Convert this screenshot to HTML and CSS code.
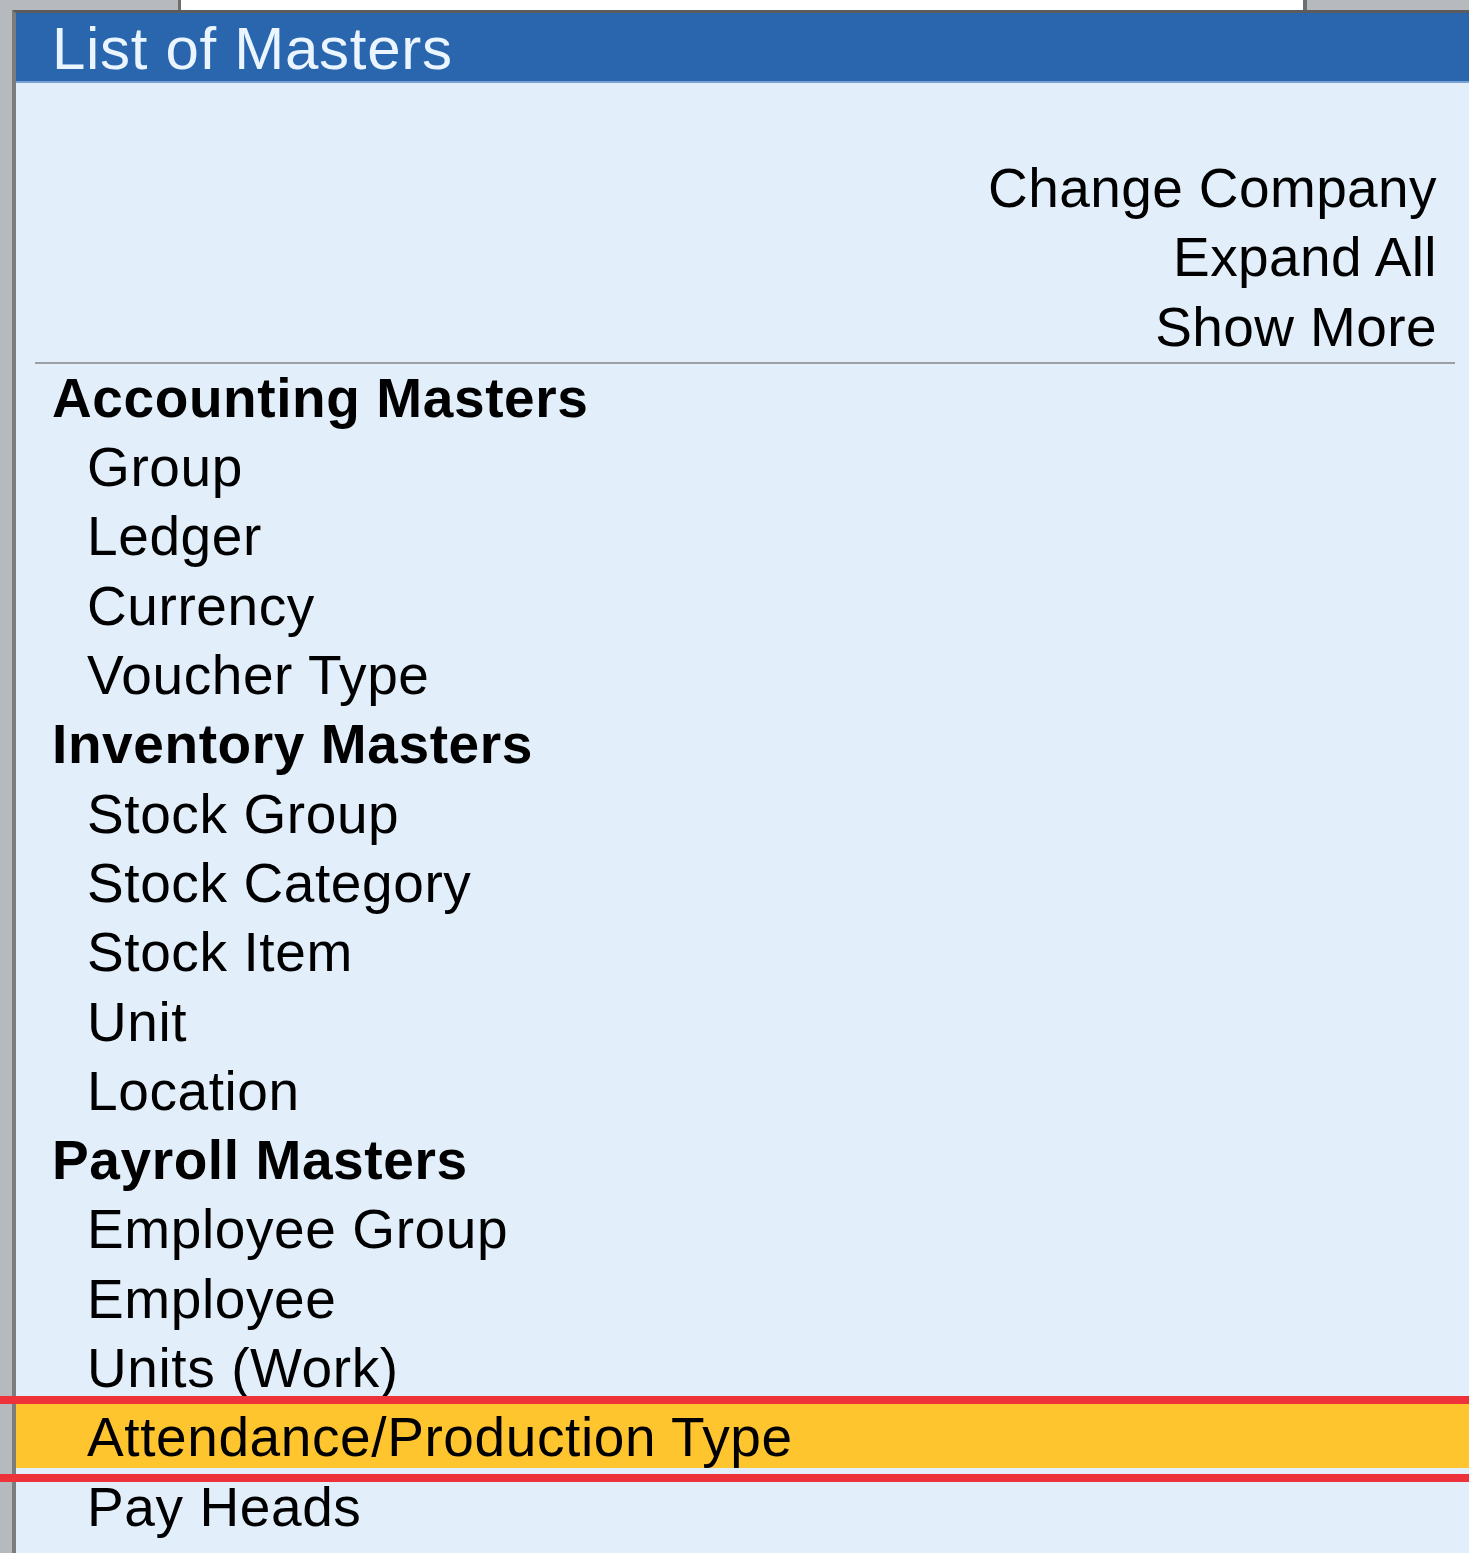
FILE: index.html
```html
<!DOCTYPE html>
<html lang="en">
<head>
<meta charset="utf-8">
<title>List of Masters</title>
<link rel="stylesheet" href="styles.css">
</head>
<body>
  <div class="topstrip"><div class="field"></div></div>
  <div class="frame">
    <div class="panel">
      <div class="titlebar">List of Masters</div>
      <div class="content">
        <div class="links">
          <div class="link">Change Company</div>
          <div class="link">Expand All</div>
          <div class="link">Show More</div>
        </div>
        <div class="sep"></div>
        <ul class="list">
          <li class="head">Accounting Masters</li>
          <li class="item">Group</li>
          <li class="item">Ledger</li>
          <li class="item">Currency</li>
          <li class="item">Voucher Type</li>
          <li class="head">Inventory Masters</li>
          <li class="item">Stock Group</li>
          <li class="item">Stock Category</li>
          <li class="item">Stock Item</li>
          <li class="item">Unit</li>
          <li class="item">Location</li>
          <li class="head">Payroll Masters</li>
          <li class="item">Employee Group</li>
          <li class="item">Employee</li>
          <li class="item">Units (Work)</li>
          <li class="item selected">Attendance/Production Type</li>
          <li class="item">Pay Heads</li>
          <li class="item">Payroll Voucher Type</li>
        </ul>
      </div>
    </div>
  </div>
  <div class="redbox"></div>
</body>
</html>
```

FILE: styles.css
```css
html, body {
  margin: 0;
  padding: 0;
}

body {
  position: relative;
  width: 1469px;
  height: 1553px;
  overflow: hidden;
  background: #b6babe;
  font-family: "Liberation Sans", Arial, sans-serif;
  color: #000;
}

.topstrip {
  height: 10px;
  display: flex;
}

.field {
  margin-left: 178px;
  width: 1122px;
  height: 10px;
  background: #ffffff;
  border-left: 3px solid #6e6e6e;
  border-right: 4px solid #6e6e6e;
}

.frame {
  display: flex;
  padding-left: 12px;
  height: 1543px;
}

.panel {
  flex: 1;
  display: flex;
  flex-direction: column;
  background: #e2effb;
  border-left: 4px solid #7c7c7c;
  border-top: 3px solid #5c5c5c;
}

.titlebar {
  height: 66px;
  padding-top: 2px;
  line-height: 68px;
  padding-left: 36px;
  background: #2966ae;
  color: #eaf5ff;
  font-size: 60px;
  letter-spacing: 0.7px;
  border-bottom: 2px solid #78a2d6;
  white-space: nowrap;
}

.content {
  padding-top: 71px;
}

.links {
  padding-right: 32px;
  text-align: right;
}

.link {
  font-size: 55px;
  line-height: 69.3px;
  letter-spacing: 0.4px;
  white-space: nowrap;
}

.sep {
  height: 2px;
  background: #9c9fa3;
  margin-left: 19px;
  margin-right: 14px;
}

.list {
  list-style: none;
  margin: 0;
  padding: 0;
}

.list li {
  font-size: 55px;
  line-height: 69.3px;
  letter-spacing: 0.6px;
  white-space: nowrap;
}

.head {
  font-weight: bold;
  padding-left: 36px;
}

.item {
  padding-left: 71px;
}

.selected {
  background: linear-gradient(#ffc52f, #ffc52f) top left / 100% calc(100% - 5px) no-repeat;
}

.redbox {
  position: absolute;
  left: 0;
  right: 0;
  top: 1396px;
  height: 86px;
  box-sizing: border-box;
  border-top: 8px solid #ee3239;
  border-bottom: 8px solid #ee3239;
  pointer-events: none;
}
```
